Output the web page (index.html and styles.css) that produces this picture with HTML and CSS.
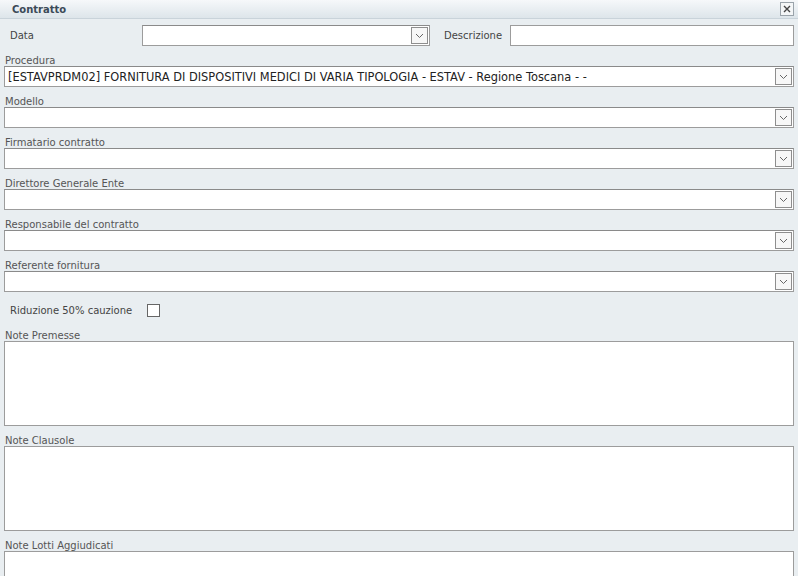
FILE: index.html
```html
<!DOCTYPE html>
<html>
<head>
<meta charset="utf-8">
<link rel="stylesheet" href="styles.css">
</head>
<body>
<div class="win">
  <div class="titlebar">
    <span class="title">Contratto</span>
    <span class="close"><svg width="10" height="10" viewBox="0 0 10 10"><path d="M2 2 L8 8 M8 2 L2 8" stroke="#444" stroke-width="1.4"/></svg></span>
  </div>
  <div class="form">
    <div class="toprow">
      <span class="lbl-data">Data</span>
      <div class="combo date"><span class="val"></span><span class="btn"><svg width="9" height="6" viewBox="0 0 9 6"><path d="M1 1 L4.5 4.5 L8 1" fill="none" stroke="#666" stroke-width="1"/></svg></span></div>
      <span class="lbl-desc">Descrizione</span>
      <div class="input desc"></div>
    </div>
    <div class="field">
      <div class="lbl">Procedura</div>
      <div class="combo"><span class="val">[ESTAVPRDM02] FORNITURA DI DISPOSITIVI MEDICI DI VARIA TIPOLOGIA - ESTAV - Regione Toscana - -</span><span class="btn"><svg width="9" height="6" viewBox="0 0 9 6"><path d="M1 1 L4.5 4.5 L8 1" fill="none" stroke="#666" stroke-width="1"/></svg></span></div>
    </div>
    <div class="field">
      <div class="lbl">Modello</div>
      <div class="combo"><span class="val"></span><span class="btn"><svg width="9" height="6" viewBox="0 0 9 6"><path d="M1 1 L4.5 4.5 L8 1" fill="none" stroke="#666" stroke-width="1"/></svg></span></div>
    </div>
    <div class="field">
      <div class="lbl">Firmatario contratto</div>
      <div class="combo"><span class="val"></span><span class="btn"><svg width="9" height="6" viewBox="0 0 9 6"><path d="M1 1 L4.5 4.5 L8 1" fill="none" stroke="#666" stroke-width="1"/></svg></span></div>
    </div>
    <div class="field">
      <div class="lbl">Direttore Generale Ente</div>
      <div class="combo"><span class="val"></span><span class="btn"><svg width="9" height="6" viewBox="0 0 9 6"><path d="M1 1 L4.5 4.5 L8 1" fill="none" stroke="#666" stroke-width="1"/></svg></span></div>
    </div>
    <div class="field">
      <div class="lbl">Responsabile del contratto</div>
      <div class="combo"><span class="val"></span><span class="btn"><svg width="9" height="6" viewBox="0 0 9 6"><path d="M1 1 L4.5 4.5 L8 1" fill="none" stroke="#666" stroke-width="1"/></svg></span></div>
    </div>
    <div class="field">
      <div class="lbl">Referente fornitura</div>
      <div class="combo"><span class="val"></span><span class="btn"><svg width="9" height="6" viewBox="0 0 9 6"><path d="M1 1 L4.5 4.5 L8 1" fill="none" stroke="#666" stroke-width="1"/></svg></span></div>
    </div>
    <div class="checkrow">
      <span class="lbl-check">Riduzione 50% cauzione</span>
      <span class="check"></span>
    </div>
    <div class="field">
      <div class="lbl">Note Premesse</div>
      <div class="area"></div>
    </div>
    <div class="field">
      <div class="lbl">Note Clausole</div>
      <div class="area"></div>
    </div>
    <div class="field">
      <div class="lbl">Note Lotti Aggiudicati</div>
      <div class="area"></div>
    </div>
  </div>
</div>
</body>
</html>
```
FILE: styles.css
```css
html, body {
  margin: 0;
  padding: 0;
  background: #e9eef1;
  overflow: hidden;
}
body {
  font-family: "DejaVu Sans", Verdana, sans-serif;
  font-size: 10px;
  color: #333;
  width: 798px;
  height: 576px;
}
.win {
  display: flex;
  flex-direction: column;
}
.titlebar {
  height: 18px;
  display: flex;
  align-items: center;
  justify-content: space-between;
  padding: 0 4px 0 12px;
  background: linear-gradient(#f6f8fa, #dde5ea);
  border-bottom: 1px solid #c9d3da;
}
.title {
  font-weight: bold;
  color: #3b4a58;
  font-size: 10px;
}
.close {
  width: 12px;
  height: 12px;
  border: 1px solid #9aa3aa;
  background: #f4f6f7;
  display: flex;
  align-items: center;
  justify-content: center;
}
.form {
  padding: 6px 4px 0 4px;
  display: flex;
  flex-direction: column;
}
.toprow {
  display: flex;
  align-items: center;
  height: 21px;
}
.lbl-data {
  margin-left: 6px;
  width: 132px;
  color: #444;
}
.combo {
  height: 19px;
  border: 1px solid #9c9c9c;
  border-top-color: #8a8a8a;
  background: #fff;
  display: flex;
  align-items: center;
  justify-content: space-between;
}
.combo.date {
  width: 286px;
}
.val {
  padding-left: 3px;
  font-size: 11.4px;
  color: #222;
  white-space: nowrap;
}
.btn {
  width: 15px;
  height: 15px;
  margin-right: 1px;
  border: 1px solid #8e8e8e;
  background: #f7f7f7;
  display: flex;
  align-items: center;
  justify-content: center;
}
.lbl-desc {
  margin-left: 14px;
  width: 66px;
  color: #444;
}
.input.desc {
  flex: 1;
  height: 19px;
  border: 1px solid #9c9c9c;
  background: #fff;
}
.field {
  display: flex;
  flex-direction: column;
}
.field .lbl {
  height: 14px;
  line-height: 18px;
  margin-top: 6px;
  color: #555;
  padding-left: 1px;
}
.checkrow {
  display: flex;
  align-items: center;
  height: 20px;
  margin-top: 8px;
  margin-bottom: 1px;
}
.lbl-check {
  margin-left: 6px;
  width: 137px;
  color: #444;
}
.check {
  width: 11px;
  height: 11px;
  border: 1px solid #666;
  background: #fff;
}
.area {
  height: 83px;
  border: 1px solid #9c9c9c;
  background: #fff;
}
```
